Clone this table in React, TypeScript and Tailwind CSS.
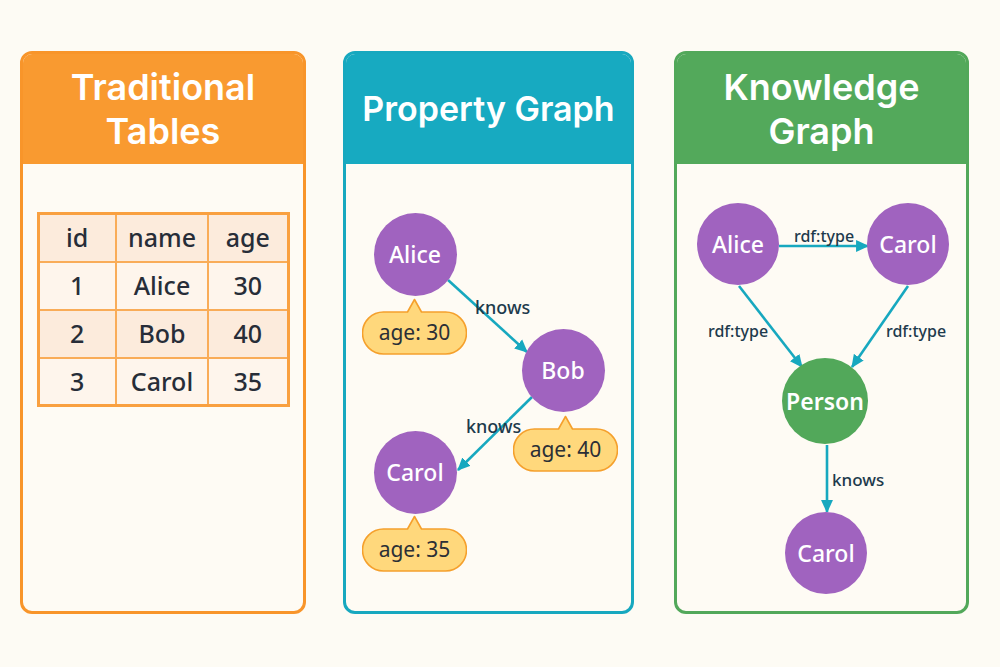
import React from "react";

const FONT = "font-['Noto_Sans','Open_Sans',sans-serif]";

type Node = { label: string; x: number; y: number; r: number; green?: boolean };
type Edge = { x1: number; y1: number; x2: number; y2: number };
type Label = { text: string; x: number; y: number; size: string };
type Badge = { text: string; x: number; y: number };

function Bubble({ text, x, y }: Badge) {
  return (
    <div className="absolute w-[105px] h-[57px]" style={{ left: x, top: y }}>
      <svg width="105" height="57" viewBox="0 0 105 57" className="absolute inset-0">
        <path
          d="M21.5 14 H45.5 L52.5 1.5 L59.5 14 H83.5 A21 21 0 0 1 83.5 56 H21.5 A21 21 0 0 1 21.5 14 Z"
          fill="#FFD87C"
          stroke="#F5A02C"
          strokeWidth="1.6"
          strokeLinejoin="round"
        />
      </svg>
      <div className="absolute left-0 right-0 top-[14px] h-[42px] flex items-center justify-center text-[21px] text-[#2b2f36]">
        {text}
      </div>
    </div>
  );
}

function Diagram({
  id,
  nodes,
  edges,
  labels,
  badges = [],
}: {
  id: string;
  nodes: Node[];
  edges: Edge[];
  labels: Label[];
  badges?: Badge[];
}) {
  return (
    <div className="relative flex-1">
      <svg className="absolute inset-0 w-full h-full">
        <defs>
          <marker
            id={id}
            viewBox="0 0 12 12"
            refX="11"
            refY="6"
            markerWidth="13"
            markerHeight="13"
            markerUnits="userSpaceOnUse"
            orient="auto"
          >
            <path d="M0 0.5 L12 6 L0 11.5 Z" fill="#17A8BF" />
          </marker>
        </defs>
        {edges.map((e, i) => (
          <line
            key={i}
            x1={e.x1}
            y1={e.y1}
            x2={e.x2}
            y2={e.y2}
            stroke="#17A8BF"
            strokeWidth="2.6"
            markerEnd={`url(#${id})`}
          />
        ))}
      </svg>
      {labels.map((l, i) => (
        <div
          key={i}
          className={`absolute -translate-y-1/2 leading-none font-medium text-[#1d3a4c] ${l.size}`}
          style={{ left: l.x, top: l.y }}
        >
          {l.text}
        </div>
      ))}
      {nodes.map((n) => (
        <div
          key={n.label + n.x + n.y}
          className={`absolute rounded-full flex items-center justify-center text-white text-[23px] ${
            n.green ? "bg-[#52A85A] font-semibold" : "bg-[#A063BF] font-medium"
          }`}
          style={{ left: n.x - n.r, top: n.y - n.r, width: n.r * 2, height: n.r * 2 }}
        >
          {n.label}
        </div>
      ))}
      {badges.map((b) => (
        <Bubble key={b.text} {...b} />
      ))}
    </div>
  );
}

function Panel({
  title,
  border,
  header,
  width,
  className = "",
  children,
}: {
  title: React.ReactNode;
  border: string;
  header: string;
  width: string;
  className?: string;
  children: React.ReactNode;
}) {
  return (
    <div className={`flex flex-col h-[563px] rounded-[12px] border-[3px] overflow-hidden bg-[#FEFBF4] ${border} ${width} ${className}`}>
      <div
        className={`h-[110px] shrink-0 flex items-center justify-center text-center text-white font-semibold leading-[44px] font-['Inter','Noto_Sans',sans-serif] ${header}`}
      >
        {title}
      </div>
      {children}
    </div>
  );
}

const rows = [
  ["1", "Alice", "30"],
  ["2", "Bob", "40"],
  ["3", "Carol", "35"],
];

export default function App() {
  return (
    <div className={`w-[1000px] h-[667px] bg-[#FDFBF4] flex items-start pl-[20px] pt-[51px] ${FONT}`}>
      <Panel
        title={<span className="text-[36px]">Traditional<br />Tables</span>}
        border="border-[#F8952A]"
        header="bg-[#F99A30]"
        width="w-[286px]"
      >
        <div className="pt-[48px] flex justify-center">
          <table className="border-collapse border-[3px] border-[#F9A040] text-[25px] font-medium text-[#272d38]">
            <thead>
              <tr className="bg-[#FCEBDC] h-[48px]">
                <th className="w-[78px] font-medium border-2 border-[#F9AC58]">id</th>
                <th className="w-[92px] font-medium border-2 border-[#F9AC58]">name</th>
                <th className="w-[80px] font-medium border-2 border-[#F9AC58]">age</th>
              </tr>
            </thead>
            <tbody>
              {rows.map((r, i) => (
                <tr key={r[0]} className={`h-[48px] ${i === 1 ? "bg-[#FCEBDC]" : "bg-[#FEF5EC]"}`}>
                  {r.map((c, j) => (
                    <td key={j} className="text-center border-2 border-[#F9AC58]">
                      {c}
                    </td>
                  ))}
                </tr>
              ))}
            </tbody>
          </table>
        </div>
      </Panel>

      <Panel
        title={<span className="text-[34px]">Property Graph</span>}
        border="border-[#17A8BF]"
        header="bg-[#17AAC1]"
        width="w-[291px]"
        className="ml-[37px]"
      >
        <Diagram
          id="pg"
          nodes={[
            { label: "Alice", x: 69, y: 90, r: 41.5 },
            { label: "Bob", x: 217, y: 206, r: 41.5 },
            { label: "Carol", x: 69, y: 308, r: 41.5 },
          ]}
          edges={[
            { x1: 102, y1: 116, x2: 181, y2: 188 },
            { x1: 186, y1: 233, x2: 112, y2: 306 },
          ]}
          labels={[
            { text: "knows", x: 129, y: 143, size: "text-[18px]" },
            { text: "knows", x: 120, y: 262, size: "text-[18px]" },
          ]}
          badges={[
            { text: "age: 30", x: 16, y: 134 },
            { text: "age: 40", x: 167, y: 251 },
            { text: "age: 35", x: 16, y: 351 },
          ]}
        />
      </Panel>

      <Panel
        title={<span className="text-[36px]">Knowledge<br />Graph</span>}
        border="border-[#52A85A]"
        header="bg-[#53A95B]"
        width="w-[295px]"
        className="ml-[40px]"
      >
        <Diagram
          id="kg"
          nodes={[
            { label: "Alice", x: 61, y: 80, r: 41 },
            { label: "Carol", x: 231, y: 80, r: 41 },
            { label: "Person", x: 148, y: 237, r: 43, green: true },
            { label: "Carol", x: 149, y: 389, r: 41 },
          ]}
          edges={[
            { x1: 102, y1: 82, x2: 191, y2: 82 },
            { x1: 62, y1: 122, x2: 125, y2: 203 },
            { x1: 231, y1: 122, x2: 175, y2: 203 },
            { x1: 150, y1: 281, x2: 150, y2: 348 },
          ]}
          labels={[
            { text: "rdf:type", x: 117, y: 72, size: "text-[16px]" },
            { text: "rdf:type", x: 31, y: 167, size: "text-[16px]" },
            { text: "rdf:type", x: 209, y: 167, size: "text-[16px]" },
            { text: "knows", x: 155, y: 315, size: "text-[17px]" },
          ]}
        />
      </Panel>
    </div>
  );
}
